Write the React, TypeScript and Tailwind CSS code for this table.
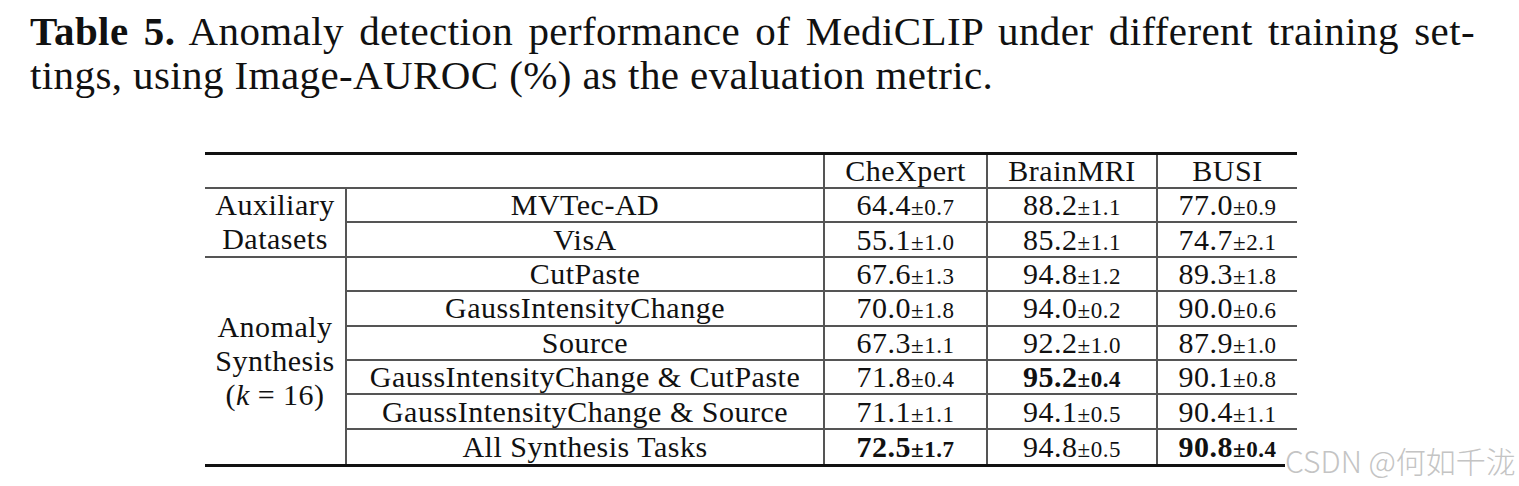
import React from 'react';

type Val = { v: string; pm: string; bold?: boolean };

interface Row {
  name: string;
  vals: Val[];
}

const auxRows: Row[] = [
  { name: 'MVTec-AD', vals: [{ v: '64.4', pm: '0.7' }, { v: '88.2', pm: '1.1' }, { v: '77.0', pm: '0.9' }] },
  { name: 'VisA', vals: [{ v: '55.1', pm: '1.0' }, { v: '85.2', pm: '1.1' }, { v: '74.7', pm: '2.1' }] },
];

const synRows: Row[] = [
  { name: 'CutPaste', vals: [{ v: '67.6', pm: '1.3' }, { v: '94.8', pm: '1.2' }, { v: '89.3', pm: '1.8' }] },
  { name: 'GaussIntensityChange', vals: [{ v: '70.0', pm: '1.8' }, { v: '94.0', pm: '0.2' }, { v: '90.0', pm: '0.6' }] },
  { name: 'Source', vals: [{ v: '67.3', pm: '1.1' }, { v: '92.2', pm: '1.0' }, { v: '87.9', pm: '1.0' }] },
  {
    name: 'GaussIntensityChange & CutPaste',
    vals: [{ v: '71.8', pm: '0.4' }, { v: '95.2', pm: '0.4', bold: true }, { v: '90.1', pm: '0.8' }],
  },
  { name: 'GaussIntensityChange & Source', vals: [{ v: '71.1', pm: '1.1' }, { v: '94.1', pm: '0.5' }, { v: '90.4', pm: '1.1' }] },
  {
    name: 'All Synthesis Tasks',
    vals: [{ v: '72.5', pm: '1.7', bold: true }, { v: '94.8', pm: '0.5' }, { v: '90.8', pm: '0.4', bold: true }],
  },
];

const cell = 'flex items-center justify-center border-[#555]';

const Value: React.FC<{ val: Val }> = ({ val }) => (
  <span className={val.bold ? 'font-bold' : ''}>
    {val.v}
    <span className="text-[23px]">±{val.pm}</span>
  </span>
);

const DataRow: React.FC<{ row: Row; last?: boolean }> = ({ row, last }) => {
  const b = last ? '' : 'border-b-2';
  return (
    <>
      <div className={`${cell} ${b} border-r-2`}>{row.name}</div>
      <div className={`${cell} ${b} border-r-2`}>
        <Value val={row.vals[0]} />
      </div>
      <div className={`${cell} ${b} border-r-2`}>
        <Value val={row.vals[1]} />
      </div>
      <div className={`${cell} ${b}`}>
        <Value val={row.vals[2]} />
      </div>
    </>
  );
};

export default function App() {
  return (
    <div className="relative w-[1519px] h-[486px] overflow-hidden bg-white text-[#111] font-['Liberation_Serif',serif]">
      <div className="pl-[30px] pt-[9px] text-[41px] leading-[44px] tracking-[0.4px]">
        <div className="w-[1445px] text-justify [text-align-last:justify]">
          <span className="font-bold">Table 5.</span> Anomaly detection performance of MediCLIP under different training set-
        </div>
        <div>tings, using Image-AUROC (%) as the evaluation metric.</div>
      </div>

      <div className="ml-[205px] mt-[55px] w-[1092px] grid grid-cols-[142px_478px_163px_170px_139px] grid-rows-[34px_repeat(8,34.4px)] border-t-[3px] border-b-[3px] border-[#111] text-[30px] leading-none tracking-[0.5px]">
        <div className={`${cell} col-span-2 border-b-2 border-r-2`} />
        <div className={`${cell} border-b-2 border-r-2`}>CheXpert</div>
        <div className={`${cell} border-b-2 border-r-2`}>BrainMRI</div>
        <div className={`${cell} border-b-2`}>BUSI</div>

        <div className={`${cell} row-span-2 flex-col border-b-2 border-r-2 leading-[34px]`}>
          <span>Auxiliary</span>
          <span>Datasets</span>
        </div>
        {auxRows.map((r) => (
          <DataRow key={r.name} row={r} />
        ))}

        <div className={`${cell} row-span-6 flex-col border-r-2 leading-[34px]`}>
          <span>Anomaly</span>
          <span>Synthesis</span>
          <span>
            (<i>k</i> = 16)
          </span>
        </div>
        {synRows.map((r, i) => (
          <DataRow key={r.name} row={r} last={i === synRows.length - 1} />
        ))}
      </div>

      <div className="absolute left-[1285px] top-[442px] whitespace-nowrap bg-white pr-[4px] text-[30px] leading-[36px] font-light text-[#c4c4c4] font-['Noto_Sans_CJK_SC',sans-serif]">
        CSDN @何如千泷
      </div>
    </div>
  );
}
